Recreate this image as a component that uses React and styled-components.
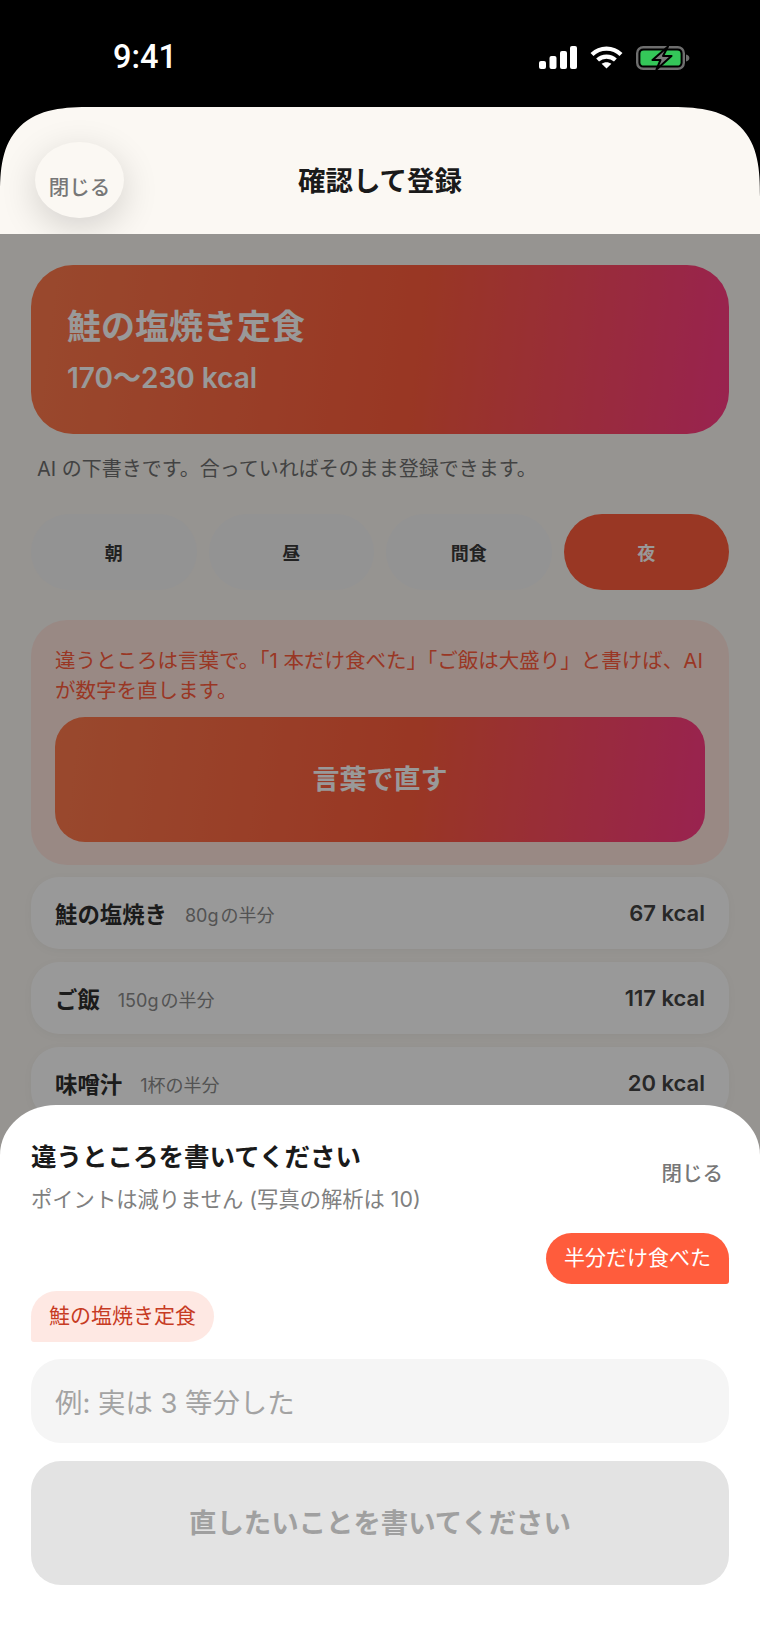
import React from 'react';
import styled, { createGlobalStyle } from 'styled-components';

const FONT = '"Inter", "Noto Sans CJK JP", sans-serif';
const BRAND = 'linear-gradient(97deg, #ff7a4c 0%, #ff5c3c 55%, #ff3a85 100%)';

const GlobalStyle = createGlobalStyle`
  html, body {
    margin: 0;
    padding: 0;
    background: #000;
  }
  * {
    box-sizing: border-box;
  }
  body {
    font-family: ${FONT};
  }
`;

const Frame = styled.div`
  position: relative;
  width: 760px;
  height: 1651px;
  overflow: hidden;
  background: #000;
`;

const StatusBar = styled.div`
  height: 107px;
  padding: 39px 70px 0 113px;
  display: flex;
  justify-content: space-between;
  align-items: flex-start;
  color: #fff;
`;

const Clock = styled.div`
  font-family: "Roboto", sans-serif;
  font-size: 32.5px;
  font-weight: 500;
  line-height: 36px;
`;

const StatusIcons = styled.div`
  display: flex;
  align-items: center;
  gap: 13px;
  height: 27px;
  margin-top: 5px;
`;

const Header = styled.header`
  position: relative;
  z-index: 2;
  height: 127px;
  overflow: hidden;
  background: #fbf8f3;
  border-radius: 92px 92px 0 0 / 90px 90px 0 0;
  corner-shape: superellipse(1.5);
  display: flex;
  align-items: center;
  justify-content: center;
  padding-top: 17px;
`;

const HeaderTitle = styled.h1`
  margin: 0;
  font-size: 27.5px;
  font-weight: 700;
  color: #1a1a1a;
`;

const BackButton = styled.button`
  position: absolute;
  left: 35px;
  top: 35px;
  width: 89px;
  height: 76px;
  padding: 11px 0 0;
  border: 0;
  border-radius: 44px / 38px;
  background: #fbf8f3;
  box-shadow: 0 10px 36px rgba(0, 0, 0, 0.16);
  font-family: ${FONT};
  font-size: 20.5px;
  font-weight: 500;
  color: #777;
`;

const Body = styled.main`
  height: 1417px;
  padding: 31px 31px 0;
  background: #faf7f2;
  display: flex;
  flex-direction: column;
`;

const Hero = styled.section`
  height: 169px;
  padding: 38px 36px 0;
  border-radius: 42px;
  background: ${BRAND};
  color: #fff;
`;

const HeroTitle = styled.h2`
  margin: 0;
  font-size: 34px;
  line-height: 48px;
  font-weight: 700;
`;

const HeroKcal = styled.div`
  margin-top: 7px;
  font-size: 28px;
  line-height: 40px;
  font-weight: 600;
`;

const Note = styled.p`
  margin: 20px 0 0 6px;
  font-size: 20px;
  line-height: 30px;
  color: #6f6f6f;
`;

const MealTabs = styled.div`
  margin-top: 30px;
  display: grid;
  grid-template-columns: repeat(4, 1fr);
  gap: 12px;
`;

const MealTab = styled.div`
  height: 76px;
  border-radius: 38px;
  display: flex;
  align-items: center;
  justify-content: center;
  font-size: 18px;
  font-weight: 700;
  background: ${({ $active }) => ($active ? '#ff5c3c' : '#f5f5f5')};
  color: ${({ $active }) => ($active ? '#fff' : '#3a3a3a')};
`;

const FixCard = styled.section`
  margin-top: 30px;
  height: 245px;
  padding: 26px 24px 0;
  border-radius: 36px;
  background: #ffe4dd;
`;

const FixText = styled.p`
  margin: 0;
  font-size: 20.5px;
  line-height: 30px;
  color: #ff5c3c;
`;

const FixButton = styled.button`
  display: block;
  width: 100%;
  height: 125px;
  margin-top: 11px;
  padding: 0 0 5px;
  border: 0;
  border-radius: 30px;
  background: ${BRAND};
  font-family: ${FONT};
  font-size: 27px;
  font-weight: 700;
  color: #fff;
`;

const FoodList = styled.ul`
  list-style: none;
  margin: 12px 0 0;
  padding: 0;
  display: flex;
  flex-direction: column;
  gap: 13px;
`;

const FoodRow = styled.li`
  height: 72px;
  padding: 0 24px 1px;
  border-radius: 28px;
  background: #fff;
  box-shadow: 0 2px 10px rgba(0, 0, 0, 0.04);
  display: flex;
  align-items: center;
`;

const FoodName = styled.span`
  font-size: 22.4px;
  font-weight: 700;
  color: #2e2e2e;
`;

const FoodAmount = styled.span`
  margin: 3px 0 0 18px;
  font-size: 18px;
  word-spacing: -3px;
  color: #8a8a8a;
`;

const FoodKcal = styled.span`
  margin-left: auto;
  font-size: 22px;
  font-weight: 600;
  color: #444;
`;

const Backdrop = styled.div`
  position: absolute;
  left: 0;
  right: 0;
  top: 234px;
  bottom: 0;
  background: rgba(0, 0, 0, 0.4);
`;

const Sheet = styled.section`
  position: absolute;
  left: 0;
  right: 0;
  top: 1105px;
  bottom: 0;
  padding: 33px 31px 0;
  border-radius: 56px 56px 0 0 / 50px 50px 0 0;
  background: #fff;
  display: flex;
  flex-direction: column;
`;

const SheetHead = styled.div`
  display: flex;
  justify-content: space-between;
  align-items: center;
`;

const SheetTitle = styled.h3`
  margin: 0;
  font-size: 25.5px;
  line-height: 38px;
  font-weight: 700;
  color: #1a1a1a;
`;

const SheetSub = styled.p`
  margin: 8px 0 0;
  font-size: 21.3px;
  line-height: 30px;
  color: #808080;
`;

const SheetClose = styled.span`
  margin: 0 6px 8px 0;
  font-size: 20.5px;
  font-weight: 500;
  color: #777;
`;

const Bubble = styled.div`
  align-self: ${({ $mine }) => ($mine ? 'flex-end' : 'flex-start')};
  height: 51px;
  padding: 0 18px 5px;
  display: flex;
  align-items: center;
  font-size: 21px;
  border-radius: ${({ $mine }) =>
    $mine ? '26px 26px 3px 26px' : '26px 26px 26px 3px'};
  background: ${({ $mine }) => ($mine ? '#ff5c3c' : '#fee8e3')};
  color: ${({ $mine }) => ($mine ? '#fff' : '#c73b23')};
`;

const Thread = styled.div`
  margin-top: 19px;
  display: flex;
  flex-direction: column;
  gap: 7px;
`;

const Input = styled.div`
  margin-top: 17px;
  height: 84px;
  padding: 0 24px;
  border-radius: 30px;
  background: #f5f5f5;
  display: flex;
  align-items: center;
  font-size: 27.4px;
  color: #a3a3a3;
`;

const Submit = styled.button`
  margin-top: 18px;
  height: 124px;
  padding: 0 0 4px;
  border: 0;
  border-radius: 30px;
  background: #e3e3e3;
  font-family: ${FONT};
  font-size: 27.4px;
  font-weight: 700;
  color: #a0a0a0;
`;

const SignalIcon = () => (
  <svg width="38" height="23" viewBox="0 0 38 23" fill="#fff">
    <rect x="0" y="15" width="7" height="8" rx="2" />
    <rect x="10.5" y="10" width="7" height="13" rx="2" />
    <rect x="21" y="5" width="7" height="18" rx="2" />
    <rect x="31" y="0" width="7" height="23" rx="2" />
  </svg>
);

const WifiIcon = () => (
  <svg width="33" height="23" viewBox="0 0 33 23" fill="none" stroke="#fff" strokeWidth="4.2">
    <path d="M2 8.5C10 0.6 23 0.6 31 8.5" />
    <path d="M7.6 14C12.6 9.4 20.4 9.4 25.4 14" />
    <path d="M16.5 22.6L11.6 17.8C14.4 15.6 18.6 15.6 21.4 17.8Z" fill="#fff" stroke="none" />
  </svg>
);

const BatteryIcon = () => (
  <svg width="54" height="24" viewBox="0 0 54 24" fill="none">
    <rect x="1.2" y="1.2" width="46.6" height="21.6" rx="6" stroke="#6e6e6e" strokeWidth="2.4" />
    <rect x="4.4" y="4.4" width="40.2" height="15.2" rx="3.4" fill="#34c759" />
    <path d="M50 8.4C52 8.9 53.4 10.2 53.4 12C53.4 13.8 52 15.1 50 15.6Z" fill="#6e6e6e" />
    <path
      d="M32 0.5L16.5 14H24.5L20.5 23.5L35.5 10H27Z"
      fill="#7a7a7a"
      stroke="#000"
      strokeWidth="2"
      strokeLinejoin="round"
    />
  </svg>
);

const MEALS = ['朝', '昼', '間食', '夜'];

const FOODS = [
  { name: '鮭の塩焼き', amount: '80g の半分', kcal: '67 kcal' },
  { name: 'ご飯', amount: '150g の半分', kcal: '117 kcal' },
  { name: '味噌汁', amount: '1杯の半分', kcal: '20 kcal' },
];

export default function App() {
  return (
    <Frame>
      <GlobalStyle />
      <StatusBar>
        <Clock>9:41</Clock>
        <StatusIcons>
          <SignalIcon />
          <WifiIcon />
          <BatteryIcon />
        </StatusIcons>
      </StatusBar>

      <Header>
        <BackButton>閉じる</BackButton>
        <HeaderTitle>確認して登録</HeaderTitle>
      </Header>

      <Body>
        <Hero>
          <HeroTitle>鮭の塩焼き定食</HeroTitle>
          <HeroKcal>170〜230 kcal</HeroKcal>
        </Hero>
        <Note>AI の下書きです。合っていればそのまま登録できます。</Note>

        <MealTabs>
          {MEALS.map((meal) => (
            <MealTab key={meal} $active={meal === '夜'}>
              {meal}
            </MealTab>
          ))}
        </MealTabs>

        <FixCard>
          <FixText>
            違うところは言葉で。「1 本だけ食べた」「ご飯は大盛り」と書けば、AI が数字を直します。
          </FixText>
          <FixButton>言葉で直す</FixButton>
        </FixCard>

        <FoodList>
          {FOODS.map((food) => (
            <FoodRow key={food.name}>
              <FoodName>{food.name}</FoodName>
              <FoodAmount>{food.amount}</FoodAmount>
              <FoodKcal>{food.kcal}</FoodKcal>
            </FoodRow>
          ))}
        </FoodList>
      </Body>

      <Backdrop />

      <Sheet>
        <SheetHead>
          <div>
            <SheetTitle>違うところを書いてください</SheetTitle>
            <SheetSub>ポイントは減りません (写真の解析は 10)</SheetSub>
          </div>
          <SheetClose>閉じる</SheetClose>
        </SheetHead>
        <Thread>
          <Bubble $mine>半分だけ食べた</Bubble>
          <Bubble>鮭の塩焼き定食</Bubble>
        </Thread>
        <Input>例: 実は 3 等分した</Input>
        <Submit>直したいことを書いてください</Submit>
      </Sheet>
    </Frame>
  );
}
